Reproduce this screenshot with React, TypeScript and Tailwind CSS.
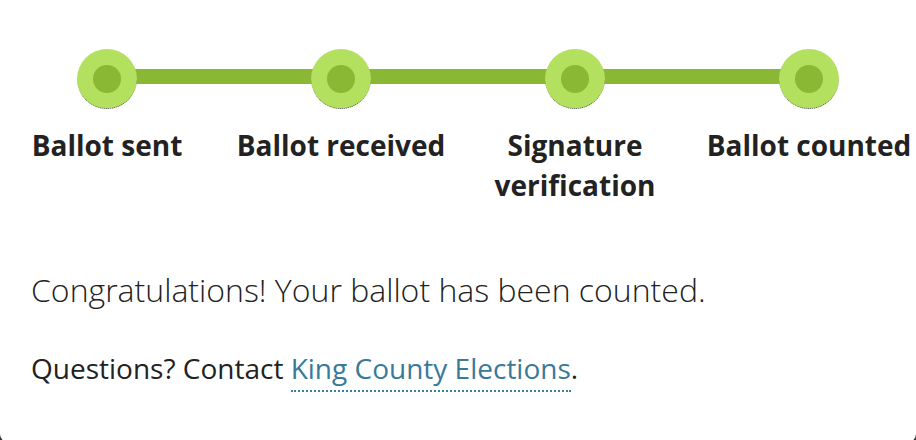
import React from "react";

const steps = ["Ballot sent", "Ballot received", "Signature verification", "Ballot counted"];

const Step = ({ label }: { label: string }) => {
  return (
    <div className="flex flex-col items-center">
      <div className="relative z-10 flex h-[60px] w-[60px] items-center justify-center rounded-full border-b border-dotted border-[#555] bg-[#b3e05f]">
        <div className="h-[28px] w-[28px] rounded-full bg-[#8ab734]" />
      </div>
      <div className="mt-[16px] w-[220px] text-center text-[28px] font-bold leading-[40px] text-[#222]">
        {label}
      </div>
    </div>
  );
};

const App = () => {
  return (
    <div className="h-[440px] w-[916px] overflow-hidden bg-[#333]" style={{ fontFamily: '"Open Sans", sans-serif' }}>
      <div className="h-[442px] w-[916px] rounded-b-[8px] bg-white">
        <div className="relative ml-[-10px] w-[936px] pt-[49px]">
          <div className="absolute left-[117px] right-[117px] top-[69px] h-[15px] bg-[#8ab734]" />
          <div className="grid grid-cols-4">
            {steps.map((s) => (
              <Step key={s} label={s} />
            ))}
          </div>
        </div>
        <div className="px-[31px] pt-[61px] text-[#222]">
          <p className="text-[32px] font-light">Congratulations! Your ballot has been counted.</p>
          <p className="mt-[33px] text-[28px]">
            Questions? Contact{" "}
            <a className="border-b-2 border-dotted border-[#3a7d9e] pb-[3px] text-[#3a7a99]" href="#">
              King County Elections
            </a>
            .
          </p>
        </div>
      </div>
    </div>
  );
};

export default App;
